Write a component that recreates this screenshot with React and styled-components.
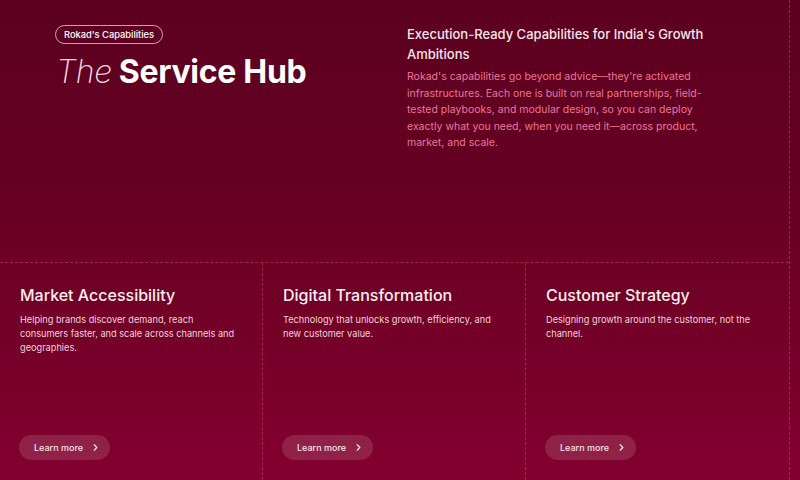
import React from 'react';
import styled, {createGlobalStyle} from 'styled-components';

const GlobalStyle = createGlobalStyle`
  html, body {
    margin: 0;
    padding: 0;
  }
  body {
    font-family: Inter, "Noto Sans", sans-serif;
    background: #5e0020;
  }
`

const line = 'rgba(215, 50, 100, 0.6)'

const Page = styled.div`
  width: 800px;
  height: 480px;
  overflow: hidden;
  background: linear-gradient(180deg, #5c001f 0%, #680023 45%, #83002e 100%);
`

const Frame = styled.div`
  width: 790px;
  height: 100%;
  display: flex;
  flex-direction: column;
  border-right: 1px dashed ${line};
  box-sizing: border-box;
`

const Intro = styled.section`
  height: 263px;
  display: grid;
  grid-template-columns: 407px 1fr;
  border-bottom: 1px dashed ${line};
  box-sizing: border-box;
`

const Lead = styled.div`
  padding: 25px 0 0 55px;
  display: flex;
  flex-direction: column;
  align-items: flex-start;
`

const Badge = styled.span`
  display: inline-flex;
  align-items: center;
  height: 19px;
  padding: 0 8px;
  border: 1px solid rgba(255, 210, 220, 0.75);
  border-radius: 999px;
  color: #fff;
  font-size: 9.3px;
  font-weight: 500;
  box-sizing: border-box;
`

const Title = styled.h1`
  margin: 8px 0 0 1px;
  font-size: 32px;
  line-height: 40px;
  font-weight: 700;
  color: #fff;
  letter-spacing: -0.3px;
  em {
    font-weight: 200;
    font-style: italic;
    margin-right: 7px;
    color: #f4dbe2;
  }
`

const Summary = styled.div`
  padding-top: 24px;
  width: 302px;
`

const SummaryHead = styled.h2`
  margin: 0;
  font-size: 13px;
  line-height: 20px;
  font-weight: 500;
  color: #f6e6ea;
`

const SummaryText = styled.p`
  margin: 5px 0 0;
  font-size: 10.5px;
  line-height: 16.6px;
  color: #ec7797;
`

const Cards = styled.section`
  flex: 1;
  display: grid;
  grid-template-columns: 263px 263px 1fr;
`

const Card = styled.article`
  display: flex;
  flex-direction: column;
  align-items: flex-start;
  padding: 22px 20px 20px;
  border-right: ${props => props.last ? 'none' : `1px dashed ${line}`};
  box-sizing: border-box;
`

const CardTitle = styled.h3`
  margin: 0;
  font-size: 16px;
  line-height: 20px;
  font-weight: 500;
  color: #fbeef1;
`

const CardText = styled.p`
  margin: 8px 0 0;
  width: 220px;
  font-size: 9.2px;
  line-height: 14px;
  color: #f2d3dc;
`

const LearnMore = styled.button`
  margin-top: auto;
  margin-left: -1px;
  display: inline-flex;
  align-items: center;
  gap: 8px;
  height: 25px;
  padding: 0 10px 0 15px;
  border: none;
  border-radius: 999px;
  background: rgba(255, 255, 255, 0.13);
  color: #f6e3e8;
  font-family: inherit;
  font-size: 9px;
  font-weight: 500;
  cursor: pointer;
  svg {
    width: 9px;
    height: 9px;
  }
`

const cards = [
  {
    title: 'Market Accessibility',
    desc: 'Helping brands discover demand, reach consumers faster, and scale across channels and geographies.'
  },
  {
    title: 'Digital Transformation',
    desc: 'Technology that unlocks growth, efficiency, and new customer value.'
  },
  {
    title: 'Customer Strategy',
    desc: 'Designing growth around the customer, not the channel.'
  }
]

const Chevron = () => (
  <svg viewBox="0 0 10 10" fill="none" stroke="currentColor" strokeWidth="1.4" strokeLinecap="round" strokeLinejoin="round">
    <path d="M3.5 2 L6.5 5 L3.5 8"/>
  </svg>
)

const App = () => {
  return (
    <Page>
      <GlobalStyle/>
      <Frame>
        <Intro>
          <Lead>
            <Badge>Rokad's Capabilities</Badge>
            <Title><em>The</em>Service Hub</Title>
          </Lead>
          <Summary>
            <SummaryHead>Execution-Ready Capabilities for India's Growth Ambitions</SummaryHead>
            <SummaryText>
              Rokad's capabilities go beyond advice—they're activated infrastructures. Each one is built on real partnerships, field-tested playbooks, and modular design, so you can deploy exactly what you need, when you need it—across product, market, and scale.
            </SummaryText>
          </Summary>
        </Intro>
        <Cards>
          {cards.map((card, i) => (
            <Card key={card.title} last={i === cards.length - 1}>
              <CardTitle>{card.title}</CardTitle>
              <CardText>{card.desc}</CardText>
              <LearnMore>Learn more <Chevron/></LearnMore>
            </Card>
          ))}
        </Cards>
      </Frame>
    </Page>
  )
}

export default App
